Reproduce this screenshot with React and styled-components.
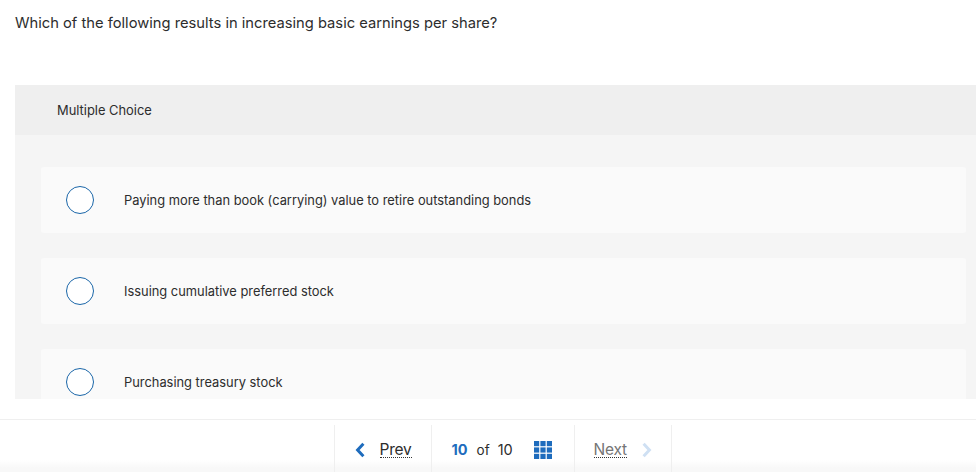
import React from 'react';
import styled, { createGlobalStyle } from 'styled-components';

const Global = createGlobalStyle`
  html, body { margin: 0; padding: 0; background: #fff; }
  body { font-family: Inter, "Liberation Sans", sans-serif; color: #2b2b2b; }
`;
const Page = styled.div`
  width: 976px; height: 472px; overflow: hidden; display: flex; flex-direction: column;
`;
const Main = styled.div`
  height: 419px; padding: 0 0 20px 15px; box-sizing: border-box; display: flex; flex-direction: column;
`;
const Question = styled.p`
  margin: 0; padding-top: 13px; height: 85px; flex: none; box-sizing: border-box;
  font-size: 14.72px; line-height: 20px; color: #2d2d2d;
`;
const Panel = styled.section`
  flex: 1; min-height: 0; overflow: hidden; background: #f5f5f5;
`;
const PanelHeader = styled.div`
  height: 50px; padding-left: 42px; display: flex; align-items: center;
  background: #efefef; font-size: 12.9px; color: #2d2d2d;
`;
const Options = styled.div`
  padding: 32px 10px 0 26px; display: flex; flex-direction: column; gap: 25px;
`;
const Option = styled.div`
  height: 66px; flex: none; display: flex; align-items: center; padding-left: 25px;
  background: #fafafa; border-radius: 3px; font-size: 12.87px; color: #2d2d2d;
`;
const Radio = styled.span`
  width: 28px; height: 28px; box-sizing: border-box; flex: none; margin-right: 30px;
  border: 1.5px solid #1a66a8; border-radius: 50%; background: #fff;
`;
const Footer = styled.footer`
  height: 53px; box-sizing: border-box; border-top: 1px solid #efefef;
  padding: 5px 0 0 29px; display: flex; justify-content: center;
  background: linear-gradient(#fff 0, #fff 40px, #f8f8f8 48px);
`;
const Nav = styled.nav`
  display: flex; border-left: 1px solid #efefef;
`;
const NavCell = styled.div`
  display: flex; align-items: center; box-sizing: border-box;
  width: ${p => p.$w}px; padding: 2px 0 0 ${p => p.$left}px; border-right: 1px solid #efefef;
`;
const NavLink = styled.span`
  color: ${p => p.$muted ? '#757575' : '#2d2d2d'};
  border-bottom: 1px dotted #333; line-height: 15px; margin: ${p => p.$margin};
  font-size: 15.5px; letter-spacing: -0.2px;
`;
const Current = styled.b`
  color: #1e6cbd; font-weight: 700; font-size: 14.5px;
`;
const Of = styled.span`
  margin: 0 8px 0 9px; font-size: 13.5px; color: #2d2d2d;
`;
const Total = styled.span`
  font-size: 14.5px; color: #2d2d2d; margin-right: 21px;
`;
const Chevron = ({ dir, color }) => (
  <svg width="10" height="16" viewBox="0 0 10 16" aria-hidden="true">
    <path d={dir === 'left' ? 'M8.4 1.8 2.6 8 8.4 14.2' : 'M1.6 1.8 7.4 8 1.6 14.2'} fill="none" stroke={color} strokeWidth="3" />
  </svg>
);
const Grid = () => (
  <svg width="18" height="18" viewBox="0 0 18 18" aria-hidden="true" fill="#1e6cbd">
    {[0, 6.4, 12.8].flatMap(y => [0, 6.4, 12.8].map(x => <rect key={`${x}-${y}`} x={x} y={y} width="5.2" height="5.2" />))}
  </svg>
);

export default function App() {
  return (
    <Page>
      <Global />
      <Main>
        <Question>Which of the following results in increasing basic earnings per share?</Question>
        <Panel>
          <PanelHeader>Multiple Choice</PanelHeader>
          <Options>
            {['Paying more than book (carrying) value to retire outstanding bonds', 'Issuing cumulative preferred stock', 'Purchasing treasury stock'].map(t => (
              <Option key={t}><Radio />{t}</Option>
            ))}
          </Options>
        </Panel>
      </Main>
      <Footer>
        <Nav>
          <NavCell $w={97} $left={20}>
            <Chevron dir="left" color="#1e6cbd" />
            <NavLink $margin="0 0 0 15px">Prev</NavLink>
          </NavCell>
          <NavCell $w={143} $left={20}>
            <Current>10</Current><Of>of</Of><Total>10</Total><Grid />
          </NavCell>
          <NavCell $w={97} $left={19}>
            <NavLink $muted $margin="0 15px 0 0">Next</NavLink>
            <Chevron dir="right" color="#cfe0f3" />
          </NavCell>
        </Nav>
      </Footer>
    </Page>
  );
}
